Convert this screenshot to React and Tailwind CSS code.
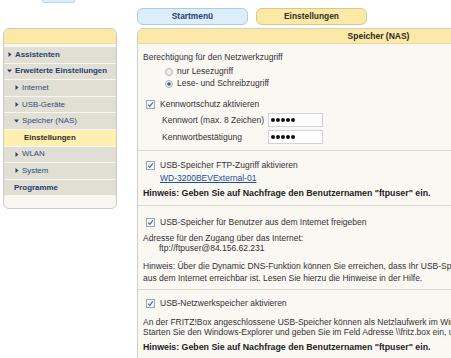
import React from "react";

function Tri({ down }) {
  return down ? (
    <svg width="5" height="4" viewBox="0 0 5 4" className="shrink-0">
      <path d="M0 0.5H5L2.5 3.5z" fill="#24467c" />
    </svg>
  ) : (
    <svg width="4" height="5" viewBox="0 0 4 5" className="shrink-0">
      <path d="M0.5 0L3.5 2.5L0.5 5z" fill="#24467c" />
    </svg>
  );
}

function Check() {
  return (
    <svg width="9" height="9" viewBox="0 0 9 9" className="shrink-0">
      <rect x="0.5" y="0.5" width="8" height="8" fill="#f4f6f8" stroke="#9ca6b2" />
      <path d="M2.2 4.6L3.8 6.3L6.9 2.4" fill="none" stroke="#4b6a98" strokeWidth="1.2" />
    </svg>
  );
}

function Radio({ on }) {
  return (
    <svg width="8" height="8" viewBox="0 0 8 8" className="shrink-0">
      <circle cx="4" cy="4" r="3.5" fill="#ececec" stroke="#b4b4b4" />
      {on && <circle cx="4" cy="4" r="1.8" fill="#3d5f92" />}
    </svg>
  );
}

function Dots() {
  return (
    <div className="w-[55px] h-[14px] bg-white border border-[#d2d2d2] flex items-center pl-[2px] gap-[1px]">
      {[0, 1, 2, 3, 4].map((i) => (
        <span key={i} className="w-[4px] h-[4px] rounded-full bg-[#111]" />
      ))}
    </div>
  );
}

function NavRow({ children, className = "" }) {
  return (
    <div className={`mt-px h-[15.6px] flex items-center bg-[#e1dfd3] ${className}`}>{children}</div>
  );
}

function Sidebar() {
  return (
    <div className="mt-[25px] ml-[3px] w-[114px] h-[181px] border border-[#cbcbc2] rounded-[6px] bg-[#f7f6f1] overflow-hidden text-[7.9px] leading-none">
      <div className="h-[15px] bg-[#fde9a7] border-b border-[#ecdca0]" />
      <div className="h-[2px]" />
      <NavRow className="pl-[4px] gap-[3px] font-bold text-[#1d3d70]">
        <Tri />
        <span>Assistenten</span>
      </NavRow>
      <NavRow className="pl-[3px] gap-[3px] font-bold text-[#1d3d70]">
        <Tri down />
        <span>Erweiterte Einstellungen</span>
      </NavRow>
      <NavRow className="pl-[11px] gap-[3px] text-[#2a4b80]">
        <Tri />
        <span>Internet</span>
      </NavRow>
      <NavRow className="pl-[11px] gap-[3px] text-[#2a4b80]">
        <Tri />
        <span>USB-Geräte</span>
      </NavRow>
      <NavRow className="pl-[10px] gap-[3px] text-[#2a4b80]">
        <Tri down />
        <span>Speicher (NAS)</span>
      </NavRow>
      <NavRow className="pl-[20px] font-bold text-[#2b2b1f] !bg-[#fff0b2]">
        <span>Einstellungen</span>
      </NavRow>
      <NavRow className="pl-[11px] gap-[3px] text-[#2a4b80]">
        <Tri />
        <span>WLAN</span>
      </NavRow>
      <NavRow className="pl-[11px] gap-[3px] text-[#2a4b80]">
        <Tri />
        <span>System</span>
      </NavRow>
      <NavRow className="pl-[10px] font-bold text-[#1d3d70]">
        <span>Programme</span>
      </NavRow>
    </div>
  );
}

function CheckLine({ children }) {
  return (
    <div className="flex items-center h-[12px] ml-[3px] gap-[5px]">
      <Check />
      <span>{children}</span>
    </div>
  );
}

export default function App() {
  return (
    <div className="w-[451px] h-[358px] overflow-hidden bg-white font-['Liberation_Sans',Arial,sans-serif] text-[#333]">
      <div className="flex items-start">
        <div className="w-[117px] shrink-0">
          <div className="ml-[42px] w-[33px] h-[3px] rounded-b-[4px] bg-[#dceefc] border border-t-0 border-[#b8d4ea]" />
          <Sidebar />
        </div>
        <div className="ml-[20px] w-[483px] shrink-0 pt-[8px]">
          <div className="flex gap-[8px]">
            <div className="w-[111px] h-[17px] rounded-[6px] bg-[#ddeefb] border border-[#accbe4] flex items-center justify-center font-bold text-[8.4px] text-[#1f3f73]">
              Startmenü
            </div>
            <div className="w-[111px] h-[17px] rounded-[6px] bg-[#fde9a7] border border-[#dcc98a] flex items-center justify-center font-bold text-[8.4px] text-[#33331f]">
              Einstellungen
            </div>
          </div>
          <div className="mt-[3px] h-[340px] border border-[#cfcfc6] rounded-t-[6px] bg-[#f9f8f3] overflow-hidden text-[8.5px] whitespace-nowrap">
            <div className="h-[15px] bg-[#fde9a7] border-b border-[#e9d9a0] flex items-center justify-center font-bold text-[8.5px] text-[#2b2b1f]">
              Speicher (NAS)
            </div>

            <div className="pl-[5px] pt-[7px] pb-[6px] border-b border-[#dadad2]">
              <div className="leading-[12px]">Berechtigung für den Netzwerkzugriff</div>
              <div className="mt-[2.5px] ml-[22px] flex items-center gap-[4px] h-[12px]">
                <Radio />
                <span>nur Lesezugriff</span>
              </div>
              <div className="ml-[22px] flex items-center gap-[4px] h-[12px]">
                <Radio on />
                <span>Lese- und Schreibzugriff</span>
              </div>
              <div className="mt-[8.5px]">
                <CheckLine>Kennwortschutz aktivieren</CheckLine>
              </div>
              <div className="mt-[3px] ml-[19px] flex items-center">
                <span className="w-[106px]">Kennwort (max. 8 Zeichen)</span>
                <Dots />
              </div>
              <div className="mt-[3px] ml-[19px] flex items-center">
                <span className="w-[106px]">Kennwortbestätigung</span>
                <Dots />
              </div>
            </div>

            <div className="pl-[5px] pt-[8px] pb-[6px] border-b border-[#dadad2]">
              <CheckLine>USB-Speicher FTP-Zugriff aktivieren</CheckLine>
              <div className="mt-px ml-[17px] leading-[12px] text-[#1f4b9c] underline">WD-3200BEVExternal-01</div>
              <div className="mt-[3px] leading-[12px] font-bold text-[8.8px] text-[#222]">
                Hinweis: Geben Sie auf Nachfrage den Benutzernamen "ftpuser" ein.
              </div>
            </div>

            <div className="pl-[5px] pt-[10px] pb-[5px] border-b border-[#dadad2]">
              <CheckLine>USB-Speicher für Benutzer aus dem Internet freigeben</CheckLine>
              <div className="mt-[5px] leading-[10px]">Adresse für den Zugang über das Internet:</div>
              <div className="ml-[16px] leading-[10px]">ftp://ftpuser@84.156.62.231</div>
              <div className="mt-[8px] leading-[11.5px]">
                Hinweis: Über die Dynamic DNS-Funktion können Sie erreichen, dass Ihr USB-Speicher
                <br />
                aus dem Internet erreichbar ist. Lesen Sie hierzu die Hinweise in der Hilfe.
              </div>
            </div>

            <div className="pl-[5px] pt-[7px] pb-[6px]">
              <CheckLine>USB-Netzwerkspeicher aktivieren</CheckLine>
              <div className="mt-[7.5px] leading-[10px]">
                An der FRITZ!Box angeschlossene USB-Speicher können als Netzlaufwerk im Windows-Explorer genutzt werden.
                <br />
                Starten Sie den Windows-Explorer und geben Sie im Feld Adresse \\fritz.box ein, um ihn zu öffnen.
              </div>
              <div className="mt-[4px] leading-[12px] font-bold text-[8.8px] text-[#222]">
                Hinweis: Geben Sie auf Nachfrage den Benutzernamen "ftpuser" ein.
              </div>
            </div>
          </div>
        </div>
      </div>
    </div>
  );
}
